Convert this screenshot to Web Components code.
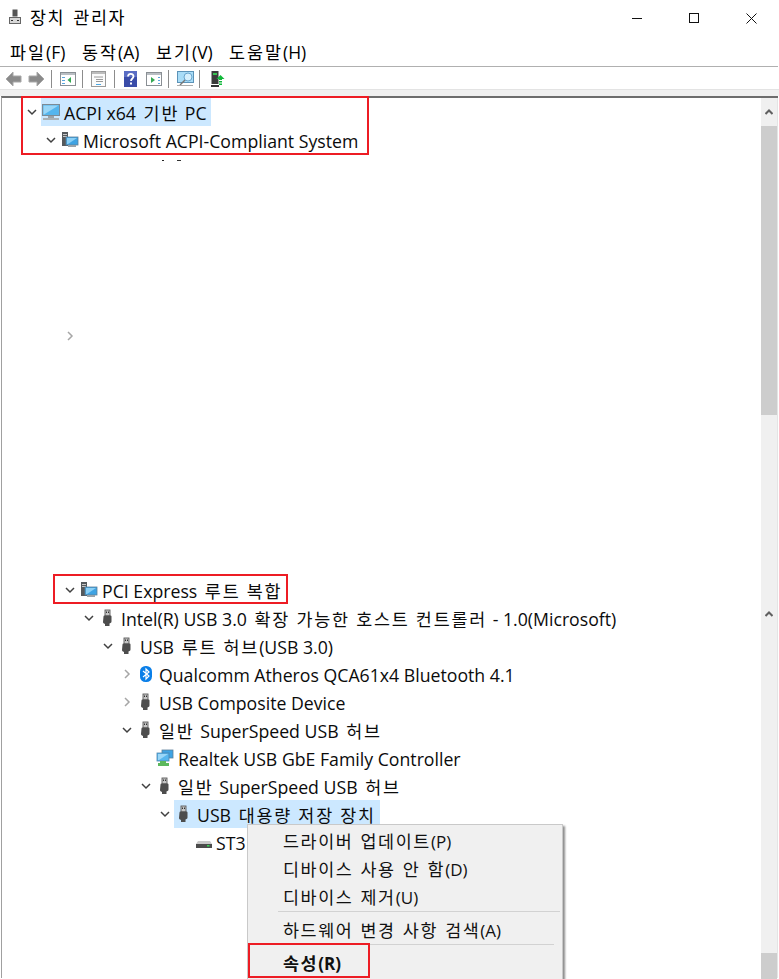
<!DOCTYPE html>
<html lang="ko"><head><meta charset="utf-8"><title>장치 관리자</title>
<style>
html,body{margin:0;padding:0;background:#fff;}
body{width:779px;height:979px;overflow:hidden;font-family:"Open Sans","Noto Sans CJK KR",sans-serif;color:#000;}
</style></head>
<body>
<dm-app>
  <dm-titlebar slot="title">장치 관리자</dm-titlebar>
  <dm-menubar slot="menu"><dm-text style="width:72px">파일(F)</dm-text><dm-text style="width:74px">동작(A)</dm-text><dm-text style="width:73px">보기(V)</dm-text><dm-text>도움말(H)</dm-text></dm-menubar>
  <dm-toolbar slot="tools"></dm-toolbar>
  <dm-tree slot="tree">
    <dm-row d="0" open icon="pc" selected>ACPI x64 기반 PC</dm-row>
    <dm-row d="1" open icon="sys">Microsoft ACPI-Compliant System</dm-row>
    <dm-gap h="168"><svg width="30" height="4" viewBox="0 0 30 4" style="position:absolute;left:158px;top:5px"><rect x="2" y="1" width="2" height="1" fill="#222"/><rect x="17" y="1" width="4" height="1" fill="#333"/></svg></dm-gap>
    <dm-row d="2" closed></dm-row>
    <dm-gap h="226"></dm-gap>
    <dm-row d="2" open icon="sys">PCI Express 루트 복합</dm-row>
    <dm-row d="3" open icon="usb">Intel(R) USB 3.0 확장 가능한 호스트 컨트롤러 - 1.0(Microsoft)</dm-row>
    <dm-row d="4" open icon="usb">USB 루트 허브(USB 3.0)</dm-row>
    <dm-row d="5" closed icon="bt">Qualcomm Atheros QCA61x4 Bluetooth 4.1</dm-row>
    <dm-row d="5" closed icon="usb">USB Composite Device</dm-row>
    <dm-row d="5" open icon="usb">일반 SuperSpeed USB 허브</dm-row>
    <dm-row d="6" icon="net">Realtek USB GbE Family Controller</dm-row>
    <dm-row d="6" open icon="usb">일반 SuperSpeed USB 허브</dm-row>
    <dm-row d="7" open icon="usb" selected>USB 대용량 저장 장치</dm-row>
    <dm-row d="8" icon="disk">ST3</dm-row>
  </dm-tree>
  <dm-scrollbar slot="scroll"></dm-scrollbar>
  <dm-context slot="overlay">
    <dm-item>드라이버 업데이트(P)</dm-item>
    <dm-item>디바이스 사용 안 함(D)</dm-item>
    <dm-item>디바이스 제거(U)</dm-item>
    <dm-sep></dm-sep>
    <dm-item>하드웨어 변경 사항 검색(A)</dm-item>
    <dm-sep short></dm-sep>
    <dm-item bold>속성(R)</dm-item>
  </dm-context>
  <dm-mark slot="overlay" style="left:21px;top:96px;width:348px;height:59px"></dm-mark>
  <dm-mark slot="overlay" style="left:53px;top:574px;width:235px;height:30px"></dm-mark>
  <dm-mark slot="overlay" style="left:248px;top:943px;width:122px;height:35px"></dm-mark>
</dm-app>
<script>
const ICONS={
pc:`<svg width="18" height="18" viewBox="0 0 18 18"><rect x=".5" y="1.5" width="17" height="11" fill="#5ab4ea" stroke="#7d8b96"/><rect x="1.5" y="2.5" width="15" height="9" fill="#54b5ee"/><path d="M1.5 2.5h15L2 11.5H1.5z" fill="#9bd7f8"/><rect x="6" y="13" width="6" height="2" fill="#9aa3a9"/><rect x="1" y="15" width="16" height="2" fill="#aab1b6"/></svg>`,
sys:`<svg width="18" height="18" viewBox="0 0 18 18"><rect x="1" y="1" width="6" height="14" fill="#55595c"/><rect x="2" y="3" width="4" height="1" fill="#c8c8c8"/><rect x="2" y="5" width="4" height="1" fill="#c8c8c8"/><rect x="5" y="6" width="12" height="8" fill="#3fa3e3" stroke="#5d7f99" stroke-width=".8"/><path d="M6 7h10L7 13H6z" fill="#8bd0f6"/><rect x="7" y="14" width="8" height="2" fill="#9aa3a9"/></svg>`,
usb:`<svg width="18" height="18" viewBox="0 0 18 18"><rect x="6" y="1" width="5" height="6" fill="#c4c4c4" stroke="#5a5a5a" stroke-width=".9"/><rect x="7" y="2.500" width="1" height="1.500" fill="#333"/><rect x="9" y="2.500" width="1" height="1.500" fill="#333"/><path d="M4.500 7.500q0-1 1-1h6q1 0 1 1v5q0 1-1 1.500l-1 .5v2.500h-4.500V15l-1-.5q-1-.5-1-1.500z" fill="#4d4d4d"/></svg>`,
bt:`<svg width="18" height="18" viewBox="0 0 18 18"><rect x="3" y="1" width="12" height="16" rx="5.5" fill="#0a7fe8"/><path d="M6 6l6 5-3 3V4l3 3-6 5" fill="none" stroke="#fff" stroke-width="1.2"/></svg>`,
net:`<svg width="18" height="18" viewBox="0 0 18 18"><rect x="6" y="1" width="11" height="8" fill="#3fa3e3" stroke="#5d7f99" stroke-width=".8"/><rect x="1" y="4" width="12" height="8" fill="#57b6ee" stroke="#4f86ad" stroke-width=".8"/><path d="M2 5h10L3 11H2z" fill="#9bd7f8"/><path d="M4 12h6v2h3v3H2v-3h2z" fill="#5cb85c"/></svg>`,
disk:`<svg width="16" height="18" viewBox="0 0 16 18" style="margin-left:2px;flex:none"><path d="M2 8h12l2 3H0z" fill="#c9c9c9"/><rect x="0" y="11" width="16" height="4" fill="#4b4b4b"/><rect x="11" y="12" width="2.500" height="1.500" fill="#39d353"/></svg>`
};
function wrapKorean(host){
  [...host.childNodes].forEach(n=>{
    if(n.nodeType!==3)return;
    const parts=n.textContent.split(/([가-힣]+(?: [가-힣]+)*)/);
    if(parts.length<2)return;
    const f=document.createDocumentFragment();
    parts.forEach((p,i)=>{
      if(!p)return;
      if(i%2){
        const k=document.createElement("dm-k");k.textContent=p;
        if((parts[i-1]||"").endsWith(" "))k.setAttribute("lead","");
        if((parts[i+1]||"").startsWith(" "))k.setAttribute("trail","");
        f.append(k);
      }
      else f.append(p);
    });
    n.replaceWith(f);
  });
}
function def(name,css,html,init){
  customElements.define(name,class extends HTMLElement{
    constructor(){super();this.attachShadow({mode:"open"}).innerHTML=`<style>${css}</style>${html}`;}
    connectedCallback(){if(init)init(this,this.shadowRoot);}
  });
}
def("dm-k",`:host{display:inline;font-size:17.4px;letter-spacing:var(--k-ls,1.8px);word-spacing:var(--k-ws,0)}
:host([lead]){margin-left:3px}:host([trail]){margin-right:1px}`,`<slot></slot>`);
def("dm-text",`:host{display:block;flex:none}`,`<slot></slot>`,wrapKorean);
def("dm-app",`:host{display:block;position:relative;width:779px;height:979px;overflow:hidden}
.main{display:flex;height:882px;margin-left:1px;margin-right:1px;border-top:2px solid #6d6d6d;border-left:1px solid #a0a0a0;box-sizing:border-box}`,
`<slot name="title"></slot><slot name="menu"></slot><slot name="tools"></slot><div class="main"><slot name="tree"></slot><slot name="scroll"></slot></div><slot name="overlay"></slot>`);
def("dm-titlebar",`:host{display:flex;align-items:center;height:36px;padding-left:9px;font-size:17.5px;position:relative;box-sizing:border-box;padding-bottom:3px;--k-ls:1.6px;--k-ws:2px}
svg.a{margin-right:9px;flex:none}
.b{margin-left:auto;display:flex;margin-top:3px}
.c{height:36px;display:flex;align-items:center;justify-content:center}`,
`<svg class="a" width="12" height="16" viewBox="0 0 12 16"><rect x="3.5" y="0.5" width="5" height="7" fill="#555"/><rect x="0.5" y="8.5" width="11" height="6" fill="#d8d8d8" stroke="#666"/><rect x="2" y="11" width="2" height="1" fill="#333"/><rect x="8" y="11" width="2" height="1" fill="#333"/></svg><slot></slot>
<div class="b"><div class="c" style="width:56px"><svg width="10" height="10" viewBox="0 0 10 10"><path d="M0 5.5h10" stroke="#111"/></svg></div><div class="c" style="width:58px"><svg width="11" height="11" viewBox="0 0 11 11"><rect x=".5" y=".5" width="9" height="9" fill="none" stroke="#111"/></svg></div><div class="c" style="width:56px"><svg width="11" height="11" viewBox="0 0 11 11"><path d="M.5.5l10 10M10.5.5l-10 10" stroke="#111" fill="none"/></svg></div></div>`,wrapKorean);
def("dm-menubar",`:host{display:flex;height:30px;align-items:center;padding-left:10px;border-bottom:1px solid #b0b0b0;font-size:17.5px;width:768px;--k-ls:2px}`,`<slot></slot>`);
def("dm-toolbar",`:host{display:block;height:29px;box-sizing:border-box}
.t{display:flex;align-items:center;height:22px;padding-left:5px;padding-top:1px;box-sizing:border-box}
.s{width:1px;height:18px;background:#8c8c8c;flex:none}
.strip{height:7px;background:#f0f0f0;border-top:1px solid #e3e3e3;box-sizing:border-box}
svg{flex:none}`,
`<div class="t">
<svg width="17" height="16" viewBox="0 0 17 16" style="margin-right:6px"><path d="M8 1L1 8l7 7v-4h8V5H8z" fill="#8a8a8a" stroke="#a8a8a8"/></svg>
<svg width="17" height="16" viewBox="0 0 17 16" style="margin-right:6px"><path d="M9 1l7 7-7 7v-4H1V5h8z" fill="#8a8a8a" stroke="#a8a8a8"/></svg>
<div class="s" style="margin-right:8px"></div>
<svg width="16" height="14" viewBox="0 0 16 14" style="margin-right:6px"><rect x=".5" y=".5" width="15" height="13" fill="#fff" stroke="#8a8f94"/><rect x="1" y="1" width="14" height="2" fill="#b9bec3"/><path d="M2 5h3v1H2zM2 8h3v1H2zM2 11h3v1H2z" fill="#5aa5dd"/><path d="M11 5v6L7.5 8z" fill="#35a853"/></svg>
<div class="s" style="margin-right:8px"></div>
<svg width="16" height="16" viewBox="0 0 16 16" style="margin-right:7px"><rect x=".5" y=".5" width="14" height="15" fill="#fbfbfb" stroke="#9a9a9a"/><rect x="1" y="1" width="13" height="2" fill="#bdbdbd"/><path d="M3 6h9M5 8.500h7M5 10.500h7" stroke="#9a9a9a"/><rect x="5" y="13" width="5" height="1" fill="#4aa8e6"/></svg>
<div class="s" style="margin-right:9px"></div>
<svg width="14" height="16" viewBox="0 0 14 16" style="margin-right:8px"><rect width="13" height="16" fill="#3a4ca8"/><rect width="13" height="6" fill="#5a6dc4"/><path d="M4 5.500c0-3.500 5.500-3.500 5.500 0 0 2-2.500 2-2.500 4.500" fill="none" stroke="#fff" stroke-width="1.800"/><rect x="6" y="11.500" width="2" height="2" fill="#fff"/></svg>
<svg width="16" height="14" viewBox="0 0 16 14" style="margin-right:6px"><rect x=".5" y=".5" width="15" height="13" fill="#fff" stroke="#8a8f94"/><rect x="1" y="1" width="14" height="2" fill="#b9bec3"/><path d="M12 5h2v1h-2zM12 8h2v1h-2zM12 11h2v1h-2z" fill="#5aa5dd"/><path d="M5 5v6l4-3z" fill="#35a853"/></svg>
<div class="s" style="margin-right:8px"></div>
<svg width="17" height="16" viewBox="0 0 17 16" style="margin-right:5px"><rect x=".5" y=".5" width="16" height="11" fill="#a8dcf7" stroke="#5c93b8"/><circle cx="11" cy="6" r="4" fill="#d5effc" stroke="#69a6cf"/><path d="M8 9l-5 5" stroke="#777" stroke-width="1.500"/><rect x="0" y="14" width="16" height="1" fill="#aaa"/></svg>
<div class="s" style="margin-right:11px"></div>
<svg width="14" height="16" viewBox="0 0 14 16"><rect x="0.500" y="0" width="7" height="13" fill="#3a3a3a"/><rect x="2" y="2" width="4" height="2" fill="#36c24f"/><rect x="0" y="14" width="8" height="2" fill="#333"/><path d="M9.500 4l4 4h-2.500v1h-3V8h-2.500zM8 10h3v1.500H8zM8 12.500h3V14H8z" fill="#11b83a"/></svg>
</div><div class="strip"></div>`);
def("dm-tree",`:host{display:block;flex:1;min-width:0;overflow:hidden;position:relative}`,`<slot></slot>`);
def("dm-gap",`:host{display:block;position:relative}`,`<slot></slot>`,(el)=>{el.style.height=el.getAttribute("h")+"px";});
def("dm-row",`:host{display:flex;height:28px;align-items:stretch;font-size:17.7px;white-space:nowrap;color:#0b0b0b}
.ch{width:19px;flex:none;display:flex;align-items:center;justify-content:center}
.n{display:flex;align-items:center;padding:0 4px 0 1px;height:28px;}
.l{position:relative;top:1px;line-height:28px}
:host([selected]) .n{background:#cce8ff}
.i{width:18px;height:18px;margin-right:4px;flex:none;display:flex}
.i:empty{display:none}`,
`<div class="ch"></div><div class="n"><div class="i"></div><div class="l"><slot></slot></div></div>`,
(el,sr)=>{
  wrapKorean(el);
  const d=+el.getAttribute("d")||0;
  el.style.paddingLeft=(20+19*d)+"px";
  const ch=sr.querySelector(".ch");
  if(el.hasAttribute("open"))ch.innerHTML=`<svg width="10" height="10" viewBox="0 0 10 10"><path d="M1 3l4 4 4-4" fill="none" stroke="#404040" stroke-width="1.500"/></svg>`;
  if(el.hasAttribute("closed"))ch.innerHTML=`<svg width="10" height="10" viewBox="0 0 10 10"><path d="M3 1l4 4-4 4" fill="none" stroke="#a6a6a6" stroke-width="1.500"/></svg>`;
  const ic=el.getAttribute("icon");if(ic)sr.querySelector(".i").innerHTML=ICONS[ic];
});
def("dm-scrollbar",`:host{display:flex;flex-direction:column;width:16px;flex:none;background:#f0f0f0;border-right:1px solid #e4e4e4}
.a{height:28px;flex:none;display:flex;align-items:center;justify-content:center}
.t{background:#cdcdcd;flex:none}
.g{flex:none}`,
`<div class="a"><svg width="8" height="6" viewBox="0 0 8 6"><path d="M.5 5L4 1.500 7.500 5" fill="none" stroke="#606060" stroke-width="2"/></svg></div>
<div class="t" style="height:289px"></div><div class="g" style="height:185px"></div>
<div class="a"><svg width="8" height="6" viewBox="0 0 8 6"><path d="M.5 5L4 1.500 7.500 5" fill="none" stroke="#606060" stroke-width="2"/></svg></div>
<div class="g" style="height:325px"></div><div class="t" style="height:27px"></div>`);
def("dm-context",`:host{position:absolute;left:247px;top:824px;width:316px;height:160px;box-sizing:border-box;background:#f0f0f0;border:1px solid #c9c9c9;box-shadow:2px 2px 2px rgba(0,0,0,.45);padding-top:2px;display:block;--k-ls:1.6px;--k-ws:1px}`,`<slot></slot>`);
def("dm-item",`:host{display:block;height:28px;line-height:28px;padding-left:35px;font-size:17px;color:#111;white-space:nowrap}
:host([bold]){font-weight:700}`,`<slot></slot>`,wrapKorean);
def("dm-sep",`:host{display:block;height:1px;background:#d2d2d2;margin:0 2px 4px 30px}
:host([short]){margin-right:8px}`,``);
def("dm-mark",`:host{position:absolute;box-sizing:border-box;border:2px solid #ed1c24;display:block;pointer-events:none}`,``);
</script>
</body></html>
